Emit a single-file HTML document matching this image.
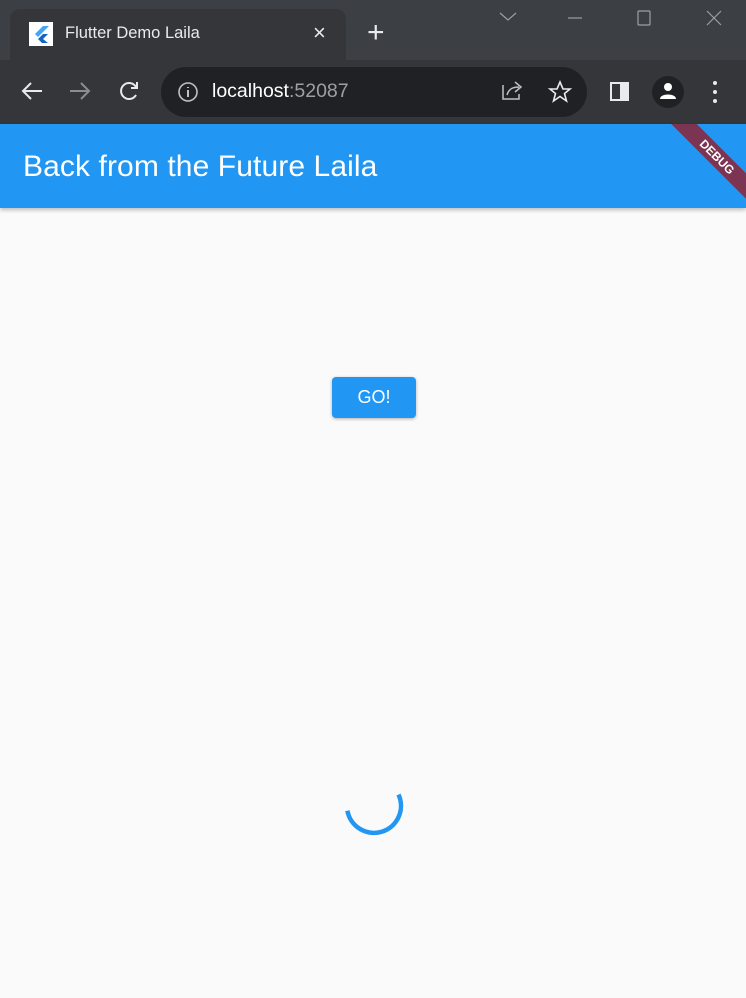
<!DOCTYPE html>
<html><head><style>
body{margin:0;width:746px;height:998px;overflow:hidden;background:#fafafa;font-family:"Liberation Sans",sans-serif;position:relative}
.top{position:absolute;left:0;top:0;width:746px;height:60px;background:#3c3f43}
.tab{position:absolute;left:10px;top:9px;width:336px;height:51px;background:#35363a;border-radius:10px 10px 0 0}
.bar{position:absolute;left:0;top:60px;width:746px;height:64px;background:#35363a}
.url{position:absolute;left:161px;top:67px;width:426px;height:50px;border-radius:25px;background:#202124}
.app{position:absolute;left:0;top:124px;width:746px;height:84px;background:#2196f3;box-shadow:0 2px 4px rgba(0,0,0,.25);overflow:hidden}
.t{position:absolute;color:#e8eaed}
</style></head><body>
<div class="top"></div>
<div class="tab"></div>
<div style="position:absolute;left:29px;top:22px;width:24px;height:24px;background:#fff"></div>
<svg style="position:absolute;left:29px;top:22px" width="24" height="24"><path d="M14 4 L6 12 L9 15 L20 4Z" fill="#42a5f5"/><path d="M14 12 L9 17 L13 21 L19 21 L14 17 L19 12Z" fill="#1565c0"/></svg>
<div class="t" style="left:65px;top:24px;font-size:16.5px">Flutter Demo Laila</div>
<div class="t" style="left:313px;top:20px;font-size:22px">×</div>
<div class="t" style="left:367px;top:16px;font-size:30px;font-weight:300">+</div>
<svg style="position:absolute;left:490px;top:5px" width="240" height="30" stroke="#9aa0a6" fill="none" stroke-width="1.2"><path d="M10 8 L18 15 L26 8"/><path d="M78 13 H92"/><rect x="148" y="6" width="12" height="14" rx="1"/><path d="M217 6 L231 20 M231 6 L217 20"/></svg>
<div class="bar"></div>
<div class="url"></div>
<svg style="position:absolute;left:0;top:60px" width="746" height="64" fill="none" stroke-width="2">
<path d="M42 31 H24 M31 23 L23 31 L31 39" stroke="#e8eaed"/>
<path d="M70 31 H88 M81 23 L89 31 L81 39" stroke="#8a8d91"/>
<path d="M136 27 A8 8 0 1 0 136 35" stroke="#e8eaed"/><path d="M137 22 V28 H131" stroke="#e8eaed"/>
<circle cx="188" cy="32" r="9" stroke="#bdc1c6" stroke-width="1.6"/><path d="M188 30 V37 M188 27 V28" stroke="#bdc1c6"/>
<path d="M503 25 V39 H519 V34 M507 35 C509 28 514 27 519 27 M515 22 L521 27 L515 32" stroke="#bdc1c6" stroke-width="1.5"/>
<path d="M560 22 L563 29 L570 29 L564.5 33.5 L566.5 41 L560 36.5 L553.5 41 L555.5 33.5 L550 29 L557 29Z" stroke="#e8eaed" stroke-width="1.6"/>
<rect x="611" y="23" width="17" height="17" stroke="#e8eaed" stroke-width="2"/><rect x="620" y="23" width="8" height="17" fill="#e8eaed" stroke="none"/>
<circle cx="668" cy="32" r="16" fill="#202124" stroke="none"/><circle cx="668" cy="27" r="4" fill="#fff" stroke="none"/><path d="M660 39 C660 33 676 33 676 39Z" fill="#fff" stroke="none"/>
<circle cx="715" cy="23" r="2" fill="#e8eaed" stroke="none"/><circle cx="715" cy="32" r="2" fill="#e8eaed" stroke="none"/><circle cx="715" cy="41" r="2" fill="#e8eaed" stroke="none"/>
</svg>
<div class="t" style="left:212px;top:80px;font-size:19.5px;color:#fff">localhost<span style="color:#9aa0a6">:52087</span></div>
<div class="app">
<div style="position:absolute;left:23px;top:26px;font-size:30px;color:#fff;letter-spacing:0.1px">Back from the Future Laila</div>
<div style="position:absolute;left:652px;top:24px;width:130px;height:18px;background:#7b3552;transform:rotate(45deg);color:#fff;font-size:12px;font-weight:bold;text-align:center;line-height:18px">DEBUG</div>
</div>
<div style="position:absolute;left:332px;top:377px;width:84px;height:41px;background:#2196f3;border-radius:4px;box-shadow:0 1px 3px rgba(0,0,0,.3);color:#fff;font-size:18px;text-align:center;line-height:41px">GO!</div>
<svg style="position:absolute;left:0;top:0" width="746" height="998"><path d="M398.5 794.6 A27 27 0 1 1 347.4 810.7" fill="none" stroke="#2196f3" stroke-width="4.5"/></svg>
</body></html>
